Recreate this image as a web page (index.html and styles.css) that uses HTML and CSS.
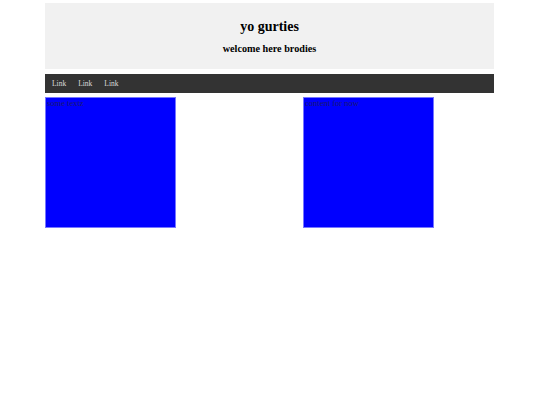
FILE: index.html
```html
<!DOCTYPE html>
<html>
<head>
<meta charset="utf-8">
<link rel="stylesheet" href="styles.css">
</head>
<body>
<div class="page">
  <header class="header">
    <h1 class="title">yo gurties</h1>
    <h2 class="subtitle">welcome here brodies</h2>
  </header>
  <nav class="nav">
    <a class="nav-link">Link</a>
    <a class="nav-link">Link</a>
    <a class="nav-link">Link</a>
  </nav>
  <div class="row">
    <div class="box">some textz</div>
    <div class="box">content for now</div>
  </div>
</div>
</body>
</html>
```
FILE: styles.css
```css
html, body { margin: 0; padding: 0; background: #fff; }
body { font-family: "Liberation Serif", serif; }
.page { width: 449px; margin: 3px 0 0 45px; }
.header {
  background: #f1f1f1;
  height: 66px;
  display: flex;
  flex-direction: column;
  align-items: center;
  padding-top: 16px;
  box-sizing: border-box;
}
.title { margin: 0; font-size: 14px; line-height: 16px; font-weight: bold; color: #000; }
.subtitle { margin: 8px 0 0; font-size: 10.2px; line-height: 12px; font-weight: bold; color: #000; }
.nav {
  margin-top: 5px;
  height: 19px;
  background: #333;
  display: flex;
  align-items: center;
  padding-left: 7px;
  gap: 12px;
}
.nav-link { color: #ddd; font-size: 7.5px; line-height: 10px; }
.row { display: flex; gap: 127px; margin-top: 4px; }
.box {
  width: 131px;
  height: 131px;
  background: #0000ff;
  border: 1px solid #7777ff;
  color: #1a1a70;
  font-size: 8.5px;
  line-height: 10px;
  padding: 0 1px;
  box-sizing: border-box;
}
```
